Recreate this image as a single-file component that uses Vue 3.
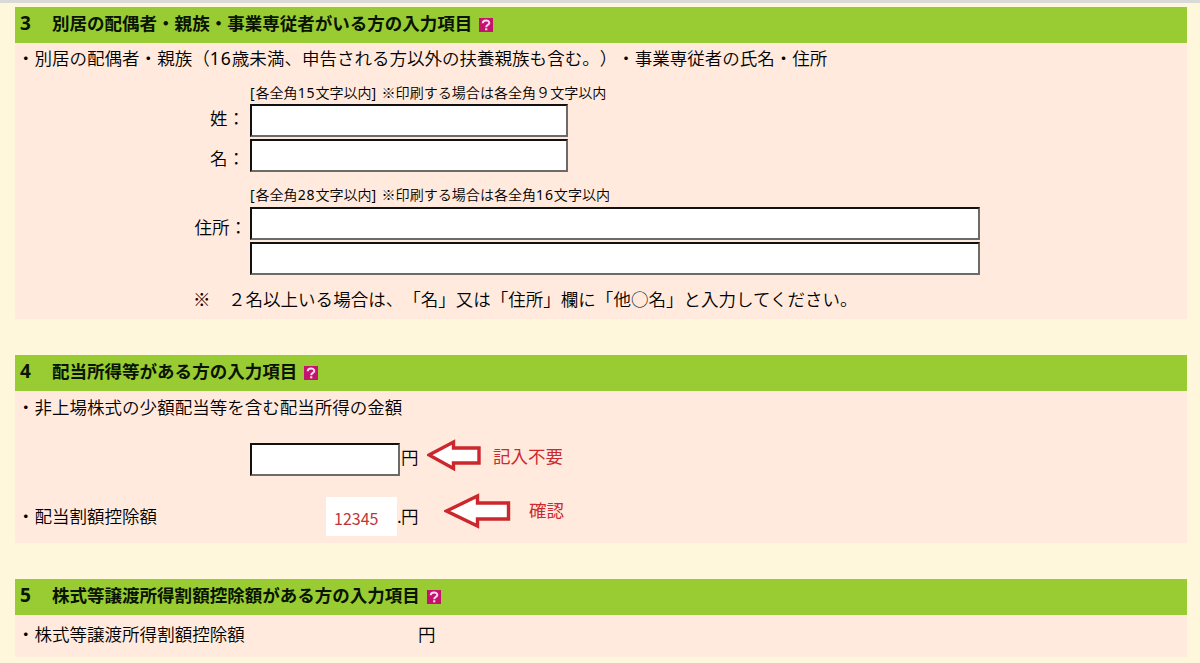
<template>
  <div class="page">
    <section class="block block-family">
      <h2 class="block-title">
        <span class="no">3</span>{{ titles[0] }}
        <svg class="help" viewBox="0 0 14 14">
          <rect width="14" height="14" fill="#c4126f" />
          <path d="M3.7 5.3C3.7 1.5 10.3 1.6 10.3 4.9C10.3 7.1 7.2 6.7 7.2 9.2" fill="none" stroke="#ffd9ef" stroke-width="2" />
          <rect x="6.1" y="10.3" width="2.2" height="2" fill="#ffd9ef" />
        </svg>
      </h2>
      <div class="block-body">
        <p class="lead">・別居の配偶者・親族（<span class="num">16</span>歳未満、申告される方以外の扶養親族も含む。）・事業専従者の氏名・住所</p>

        <p class="hint hint-name"><span class="num">[</span>各全角<span class="num">15</span>文字以内<span class="num">] </span>※印刷する場合は各全角９文字以内</p>
        <div class="field">
          <label class="label" for="sei">姓：</label>
          <input id="sei" v-model="form.sei" class="input name" type="text" />
        </div>
        <div class="field">
          <label class="label label-mei" for="mei">名：</label>
          <input id="mei" v-model="form.mei" class="input name" type="text" />
        </div>

        <p class="hint hint-address"><span class="num">[</span>各全角<span class="num">28</span>文字以内<span class="num">] </span>※印刷する場合は各全角<span class="num">16</span>文字以内</p>
        <div class="field">
          <label class="label label-address" for="address1">住所：</label>
          <input id="address1" v-model="form.address1" class="input address" type="text" />
        </div>
        <div class="field">
          <span class="label"></span>
          <input v-model="form.address2" class="input address" type="text" />
        </div>

        <p class="note">※　２名以上いる場合は、「名」又は「住所」欄に「他<span class="circle">○</span>名」と入力してください。</p>
      </div>
    </section>

    <section class="block block-dividend">
      <h2 class="block-title">
        <span class="no">4</span>{{ titles[1] }}
        <svg class="help" viewBox="0 0 14 14">
          <rect width="14" height="14" fill="#c4126f" />
          <path d="M3.7 5.3C3.7 1.5 10.3 1.6 10.3 4.9C10.3 7.1 7.2 6.7 7.2 9.2" fill="none" stroke="#ffd9ef" stroke-width="2" />
          <rect x="6.1" y="10.3" width="2.2" height="2" fill="#ffd9ef" />
        </svg>
      </h2>
      <div class="block-body">
        <p class="lead">・非上場株式の少額配当等を含む配当所得の金額</p>
        <div class="amount-row">
          <input v-model="form.dividend" class="input amount" type="text" />
          <span class="yen">円</span>
          <svg class="arrow" width="54" height="32" viewBox="0 0 54 32">
            <path d="M2 16L26.5 3V9H52V24H26.5V29.5Z" fill="#fff" stroke="#cb272d" stroke-width="3.4" />
          </svg>
          <span class="memo">記入不要</span>
        </div>
        <div class="deduct-row">
          <span class="deduct-label">・配当割額控除額</span>
          <span class="value">12345</span>
          <span class="yen"><span class="dot">.</span>円</span>
          <svg class="arrow" width="67" height="36" viewBox="0 0 67 36">
            <path d="M2.5 18L33.5 3V10H64.5V26H33.5V33Z" fill="#fff" stroke="#cb272d" stroke-width="3.4" />
          </svg>
          <span class="memo">確認</span>
        </div>
      </div>
    </section>

    <section class="block block-stock">
      <h2 class="block-title">
        <span class="no">5</span>{{ titles[2] }}
        <svg class="help" viewBox="0 0 14 14">
          <rect width="14" height="14" fill="#c4126f" />
          <path d="M3.7 5.3C3.7 1.5 10.3 1.6 10.3 4.9C10.3 7.1 7.2 6.7 7.2 9.2" fill="none" stroke="#ffd9ef" stroke-width="2" />
          <rect x="6.1" y="10.3" width="2.2" height="2" fill="#ffd9ef" />
        </svg>
      </h2>
      <div class="block-body stock-row">
        <span class="stock-label">・株式等譲渡所得割額控除額</span>
        <span>円</span>
      </div>
    </section>
  </div>
</template>

<script setup>
import { reactive } from 'vue'

// 各セクションの見出し
const titles = [
  '別居の配偶者・親族・事業専従者がいる方の入力項目',
  '配当所得等がある方の入力項目',
  '株式等譲渡所得割額控除額がある方の入力項目'
]

// 入力値
const form = reactive({
  sei: '',
  mei: '',
  address1: '',
  address2: '',
  dividend: ''
})
</script>

<style>
body {
  margin: 0;
  background: #fff7dc;
}
</style>

<style scoped>
.page {
  box-sizing: border-box;
  height: 663px;
  padding: 4px 13px 0 15px;
  overflow: hidden;
  border-top: 3px solid #d9d9d9;
  background: #fff7dc;
  color: #000;
  font-family: "Noto Sans CJK JP", sans-serif;
  font-size: 17.53px;
  font-weight: 350;
  line-height: 24px;
  white-space: nowrap;
  text-spacing-trim: space-all;
}

p {
  margin: 0;
}

.num {
  font-family: "Noto Sans", sans-serif;
  font-weight: 400;
  letter-spacing: 0.06em;
}

.block {
  display: flex;
  flex-direction: column;
  margin-bottom: 36px;
}

.block-title {
  box-sizing: border-box;
  display: flex;
  height: 36px;
  margin: 0;
  padding: 4px 0 0 5px;
  background: #9c3;
  color: #0a1400;
  font-size: 17.53px;
  font-weight: 700;
  line-height: 24px;
}

.no {
  width: 32px;
  font-family: "Noto Sans", sans-serif;
  font-size: 19px;
}

.help {
  width: 14px;
  height: 14px;
  margin: 7px 0 0 7px;
}

.block-body {
  flex: 1;
  background: #ffeadd;
}

.block-family {
  height: 312px;
}

.block-dividend {
  height: 188px;
}

.block-stock {
  height: 78px;
}

.lead {
  height: 36px;
  padding: 4px 0 0 2px;
}

.block-family .lead {
  padding-top: 3px;
}

.hint {
  padding-left: 235px;
  font-size: 14.05px;
  line-height: 20px;
}

.hint-name {
  margin-bottom: 1px;
}

.hint-address {
  margin: 10px 0 2px;
}

.field {
  display: flex;
  height: 35px;
}

.label {
  width: 235px;
  padding: 2px 5px 0 0;
  box-sizing: border-box;
  text-align: right;
}

.label-mei {
  padding-top: 7px;
}

.label-address {
  padding: 8px 3px 0 0;
}

.input {
  box-sizing: border-box;
  height: 33px;
  margin: 0;
  padding: 2px 4px;
  border: 2px solid;
  border-color: #111 #6b6b67 #6b6b67 #111;
  border-radius: 0;
  outline: none;
  background: #fff;
  font: inherit;
}

.name {
  width: 318px;
}

.address {
  width: 730px;
}

.note {
  padding: 10px 0 0 178px;
}

.circle {
  font-weight: 300;
}

.amount-row {
  display: flex;
  height: 58px;
  padding: 8px 0 0 235px;
  box-sizing: border-box;
  margin-bottom: 8px;
}

.amount {
  width: 150px;
  margin-top: 4px;
}

.amount-row .yen {
  width: 26px;
  padding: 6px 0 0 1px;
}

.memo {
  color: #cb2b30;
  font-weight: 400;
}

.amount-row .memo {
  padding: 5px 0 0 12px;
}

.deduct-row {
  display: flex;
  padding-left: 2px;
}

.deduct-label {
  width: 309px;
  padding-top: 7px;
}

.value {
  box-sizing: border-box;
  width: 71px;
  height: 39px;
  padding: 9px 0 0 8px;
  background: #fff;
  color: #c0353a;
  font-size: 16px;
  font-weight: 400;
}

.deduct-row .yen {
  display: flex;
  width: 47px;
  padding-top: 7px;
}

.dot {
  width: 4px;
}

.deduct-row .arrow {
  margin-top: -4px;
}

.deduct-row .memo {
  padding: 1px 0 0 18px;
}

.stock-row {
  display: flex;
  padding: 7px 0 0 2px;
  box-sizing: border-box;
}

.stock-label {
  width: 401px;
}
</style>
